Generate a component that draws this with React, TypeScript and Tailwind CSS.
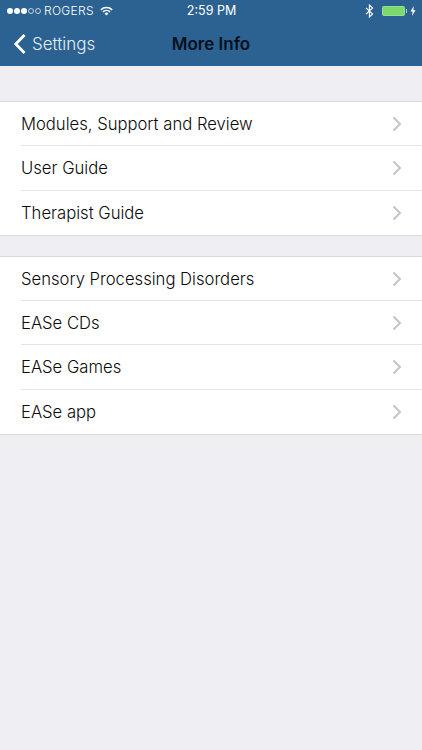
const font = { fontFamily: "Inter, 'Liberation Sans', sans-serif" };

function Chevron() {
  return (
    <svg width="10" height="16" viewBox="0 0 10 16" className="shrink-0" fill="none">
      <path d="M1.5 1.5 L8 8 L1.5 14.5" stroke="#c4c4c8" strokeWidth="2" />
    </svg>
  );
}

function Group({ items }: { items: string[] }) {
  return (
    <div className="bg-white border-y border-[#d9d9dc]">
      {items.map((t, i) => (
        <div key={t} className="pl-[21px]">
          <div className={"h-[44.3px] flex items-center justify-between pr-[20px] " + (i < items.length - 1 ? "border-b border-[#e4e4e7]" : "")}>
            <span className="pt-[1px] text-[16.65px] font-[350] text-[#0b0b0b] leading-none">{t}</span>
            <Chevron />
          </div>
        </div>
      ))}
    </div>
  );
}

export default function App() {
  return (
    <div className="w-[422px] h-[750px] bg-[#eeeef3] overflow-hidden" style={font}>
      <div className="h-[66px] bg-[#2b6291] flex flex-col">
        <div className="h-[22px] flex items-center justify-between pl-[7px] pr-[6px] text-white">
          <div className="flex-1 flex items-center text-[12px]">
            <div className="flex items-center gap-[1px]">
              <span className="w-[6px] h-[6px] rounded-full bg-white" />
              <span className="w-[6px] h-[6px] rounded-full bg-white" />
              <span className="w-[6px] h-[6px] rounded-full bg-white" />
              <span className="w-[6px] h-[6px] rounded-full border border-white/70" />
              <span className="w-[6px] h-[6px] rounded-full border border-white/70" />
            </div>
            <span className="ml-[3px] tracking-[0.3px] font-[350]">ROGERS</span>
            <svg className="ml-[6px]" width="13" height="10" viewBox="0 0 13 10">
              <path d="M0.3 3.2 A9 9 0 0 1 12.7 3.2 L11.6 4.4 A7.4 7.4 0 0 0 1.4 4.4 Z" fill="white" />
              <path d="M2.4 5.3 A6 6 0 0 1 10.6 5.3 L9.5 6.5 A4.4 4.4 0 0 0 3.5 6.5 Z" fill="white" />
              <path d="M4.5 7.4 A3 3 0 0 1 8.5 7.4 L6.5 9.6 Z" fill="white" />
            </svg>
          </div>
          <span className="text-[12.5px] font-normal">2:59 PM</span>
          <div className="flex-1 flex items-center justify-end">
            <svg width="9" height="14" viewBox="0 0 9 14" fill="none" stroke="white" strokeWidth="1.1">
              <path d="M1 3.8 L7.6 10 L4.4 13 V1 L7.6 4 L1 10.2" />
            </svg>
            <div className="ml-[8px] w-[23px] h-[10px] rounded-[2px] bg-[#7bd96f] border border-white/20" />
            <span className="w-[1.5px] h-[4px] bg-white/70 ml-[1px]" />
            <svg className="ml-[3px]" width="6" height="10" viewBox="0 0 6 10">
              <path d="M3.8 0 L0.4 5.6 H2.6 L2 10 L5.6 4.2 H3.3 Z" fill="white" />
            </svg>
          </div>
        </div>
        <div className="flex-1 relative flex items-center justify-center">
          <div className="absolute left-[13px] top-0 bottom-0 flex items-center text-[#e6edf3]">
            <svg width="14" height="22" viewBox="0 0 14 22" fill="none">
              <path d="M11.5 2 L2.8 11 L11.5 20" stroke="white" strokeWidth="2.8" />
            </svg>
            <span className="ml-[5px] text-[17px] font-[350] leading-none">Settings</span>
          </div>
          <span className="text-[17px] font-semibold text-[#04101c] leading-none">More Info</span>
        </div>
      </div>
      <div className="pt-[35px] flex flex-col gap-[20px]">
        <Group items={["Modules, Support and Review", "User Guide", "Therapist Guide"]} />
        <Group items={["Sensory Processing Disorders", "EASe CDs", "EASe Games", "EASe app"]} />
      </div>
    </div>
  );
}
